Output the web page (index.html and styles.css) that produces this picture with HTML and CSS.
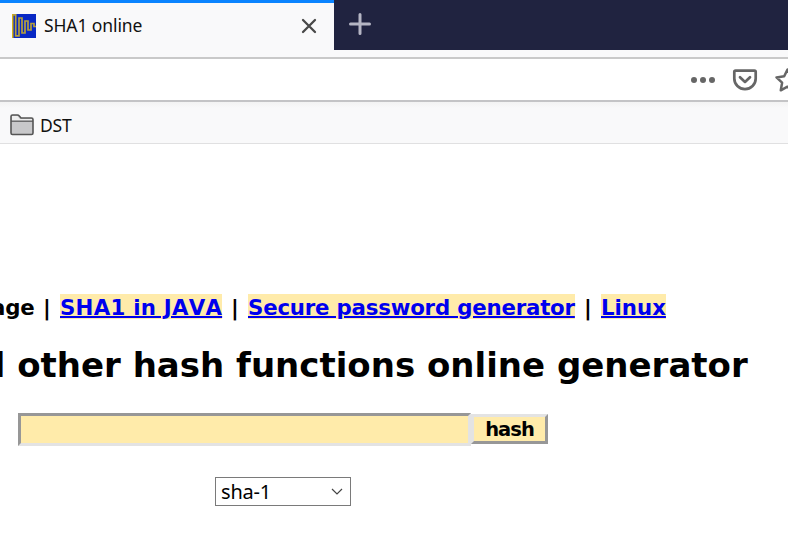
FILE: index.html
```html
<!DOCTYPE html>
<html lang="en">
<head>
<meta charset="utf-8">
<title>SHA1 online</title>
<link rel="stylesheet" href="styles.css">
</head>
<body>
<header class="browser">
  <div class="tabs">
    <div class="tab">
      <svg class="favicon" width="24" height="24" viewBox="0 0 24 24"><path fill="#0828c4" d="M0 0h24v24H0z"/><path fill="#d6b116" d="M0 0h1.5v24H0z"/><path d="M1 .8h2.700v21h3.300V4h3v15h3V7h3v9h3V9.500h3v3h2" fill="none" stroke="#b59f3c" stroke-width="1.700"/></svg>
      <span class="tab-title">SHA1 online</span>
      <svg class="close" width="16" height="16" viewBox="0 0 16 16"><path d="M2 2l12 12M14 2L2 14" stroke="#484848" stroke-width="2.300" stroke-linecap="round"/></svg>
    </div>
    <svg class="plus" width="22" height="22" viewBox="0 0 22 22"><path d="M11 1.500v19M1.500 11h19" stroke="#b5b6c4" stroke-width="3" stroke-linecap="round"/></svg>
  </div>
  <div class="urlbar">
    <svg width="100" height="30" viewBox="688 65 100 30">
      <g fill="#666"><circle cx="694" cy="80" r="3"/><circle cx="703" cy="80" r="3"/><circle cx="712" cy="80" r="3"/></g>
      <g fill="none" stroke="#666" stroke-width="2.700" stroke-linecap="round" stroke-linejoin="round">
        <path d="M735.500 70.600h19q1.200 0 1.200 1.200v6.700a10.700 10.700 0 0 1-21.400 0v-6.700q0-1.200 1.200-1.200z"/>
        <path d="M740 77.200l5 4.700 5-4.700"/>
        <path stroke-width="2.500" d="M787.500 69.500l-3.300 6.800-7.700 1.100 5.600 5.300-1.300 7.600 6.700-3.600 6.700 3.600-1.300-7.600 5.600-5.300-7.700-1.100z"/>
      </g>
    </svg>
  </div>
  <div class="bookmarks">
    <svg width="24" height="22" viewBox="0 0 24 22"><path d="M1 19V2.500Q1 1 2.500 1h5q1 0 1.600.8L11 4h10.500Q23 4 23 5.500V19q0 1.500-1.500 1.500h-19Q1 20.500 1 19z" fill="#c8c8ca" stroke="#555" stroke-width="1.600"/><path d="M2 2h5.500l2.300 3H22v1.500H2z" fill="#eee"/><path d="M1 7.200h22" stroke="#555" stroke-width="1.200"/></svg>
    <span class="folder">DST</span>
  </div>
</header>
<main>
  <nav class="links"><span class="age">age</span><i>|</i><a class="java" href="#">SHA1 in JAVA</a><i>|</i><a class="password" href="#">Secure password generator</a><i>|</i><a href="#">Linux</a></nav>
  <h1>d other hash functions online generator</h1>
  <form class="hash-form"><input class="query" type="text" aria-label="Text"><button class="submit" type="button">hash</button></form>
  <div class="select" role="button"><span>sha-1</span><svg width="12" height="8" viewBox="0 0 12 8"><path d="M1 1l5 5 5-5" fill="none" stroke="#444" stroke-width="1.200"/></svg></div>
</main>
</body>
</html>
```
FILE: styles.css
```css
* { box-sizing: border-box; }
body { margin: 0; width: 788px; height: 557px; overflow: hidden; background: #fff; color: #000; font-family: "DejaVu Sans", sans-serif; }
svg { display: block; flex: none; }
.browser { height: 144px; background: #f9f9fa; font-family: "Noto Sans", sans-serif; color: #111; }
.tabs { display: flex; height: 50px; background: #202340; }
.tab { display: flex; align-items: center; width: 334px; height: 50px; padding: 0 17px 2px 12px; border-top: 3px solid #0a84ff; background: #f9f9fa; }
.tab-title { flex: 1; margin: -1px 0 0 8px; font-size: 17.5px; line-height: 24px; letter-spacing: -.1px; }
.plus { margin: 13px 0 0 15px; }
.urlbar { display: flex; justify-content: flex-end; height: 45px; margin-top: 7px; padding-top: 7px; background: #fff; border-top: 2px solid #c9c9c9; border-bottom: 2px solid #c4c4c6; }
.urlbar svg { margin-top: -1px; }
.bookmarks { display: flex; align-items: center; height: 42px; padding: 4px 0 0 10px; border-bottom: 1px solid #e0e0e1; background: linear-gradient(#f3f3f3, #f9f9fa 6px); }
.folder { margin-left: 6px; font-size: 17.5px; letter-spacing: -.2px; }
main { padding-top: 150px; }
.links { display: flex; align-items: flex-start; height: 25px; margin-left: -9px; font-size: 21.3px; line-height: 27px; font-weight: bold; white-space: nowrap; }
.links a { height: 25px; color: #00e; background: #ffebaa; text-decoration-thickness: 2px; }
.links a, .age { display: block; flex: none; }
.age { width: 43px; letter-spacing: -.2px; }
.links i { width: 26px; text-align: center; font-style: normal; }
.java { width: 162px; font-kerning: none; letter-spacing: .25px; }
.password { width: 327px; letter-spacing: -.2px; }
h1 { margin: 23px 0 0 -19px; font-size: 34px; line-height: 46px; white-space: nowrap; }
.hash-form { display: flex; align-items: flex-start; margin: 25px 0 0 18px; }
.query { width: 453px; height: 33px; padding: 0; border: 3px solid; border-color: #979797 #e3e3e3 #e3e3e3 #979797; background: #ffebaa; }
.submit { width: 77px; height: 30px; margin-top: 1px; padding: 2px 0 0; border: 3px solid; border-color: #e3e3e3 #979797 #979797 #e3e3e3; background: #ffebaa; color: #000; font: bold 19.5px/22px "DejaVu Sans", sans-serif; letter-spacing: -1px; }
.select { display: flex; align-items: center; justify-content: space-between; width: 136px; height: 29px; margin: 31px 0 0 215px; padding: 0 7px 0 5px; border: 1px solid #7a7a7a; font: 20px/27px "Noto Sans", sans-serif; letter-spacing: -.2px; }
```
